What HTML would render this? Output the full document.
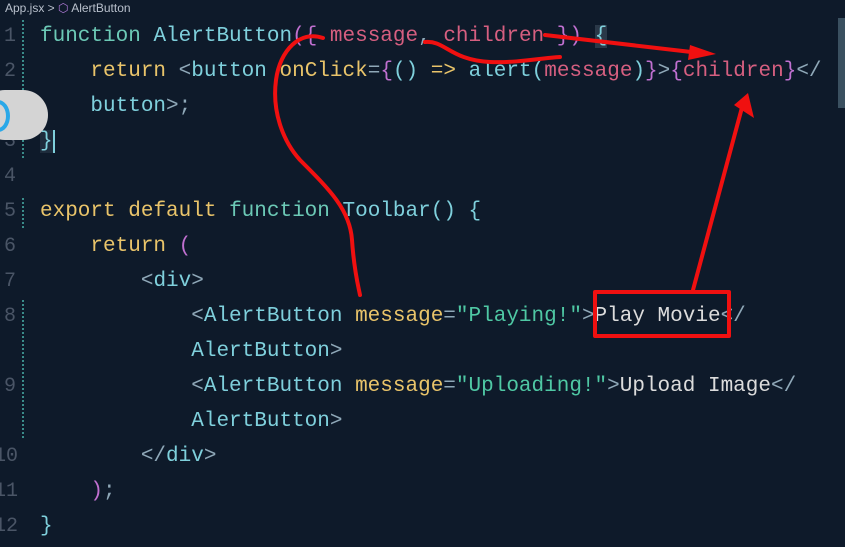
<!DOCTYPE html>
<html><head><meta charset="utf-8"><style>
html,body{margin:0;padding:0}
body{width:845px;height:547px;overflow:hidden;background:#0e1a2a;position:relative;font-family:"Liberation Mono",monospace}
.bc{position:absolute;left:5px;top:1px;font:12px "Liberation Sans",sans-serif;color:#b8c0cc}
.ln{position:absolute;left:0;width:16px;text-align:right;font-size:20px;color:#4a5566}
.code{position:absolute;left:40px;font-size:21px;white-space:pre;color:#8fd3e0;margin-top:3px}
.k{color:#6cc9b6}.t{color:#7fd0dc}.y{color:#e9c46a}.p{color:#d65f80}.g{color:#4fc8a4}.w{color:#dcdcdc}.m{color:#c070d0}.d{color:#8fa8b8}
.gut{position:absolute;left:22px;width:2px;background:repeating-linear-gradient(#3a8c8a 0 2px,transparent 2px 4px)}
</style></head><body>
<div class="bc">App.jsx &gt; <span style="color:#b07ad8">⬡</span> AlertButton</div>
<div class="gut" style="top:20px;height:140px"></div>
<div class="gut" style="top:198px;height:30px"></div>
<div class="gut" style="top:300px;height:140px"></div>
<div class="ln" style="top:25px">1</div>
<div class="ln" style="top:60px">2</div>
<div class="ln" style="top:130px">3</div>
<div class="ln" style="top:165px">4</div>
<div class="ln" style="top:200px">5</div>
<div class="ln" style="top:235px">6</div>
<div class="ln" style="top:270px">7</div>
<div class="ln" style="top:305px">8</div>
<div class="ln" style="top:375px">9</div>
<div class="ln" style="top:445px;left:-6px">10</div>
<div class="ln" style="top:480px;left:-6px">11</div>
<div class="ln" style="top:515px;left:-6px">12</div>
<div class="code" style="top:22px"><span class="k">function</span> <span class="t">AlertButton</span><span class="m">({</span> <span class="p">message</span><span class="d">,</span> <span class="p">children</span> <span class="m">})</span> <span class="t" style="background:#2a3848">{</span></div>
<div class="code" style="top:57px">    <span class="y">return</span> <span class="d">&lt;</span><span class="t">button</span> <span class="y">onClick</span><span class="d">=</span><span class="m">{</span><span class="t">()</span> <span class="y">=&gt;</span> <span class="t">alert(</span><span class="p">message</span><span class="t">)</span><span class="m">}</span><span class="d">&gt;</span><span class="m">{</span><span class="p">children</span><span class="m">}</span><span class="d">&lt;/</span></div>
<div class="code" style="top:92px">    <span class="t">button</span><span class="d">&gt;;</span></div>
<div class="code" style="top:127px"><span class="t" style="border-right:2px solid #7fd0dc;background:#1e2c3c">}</span></div>
<div class="code" style="top:197px"><span class="y">export</span> <span class="y">default</span> <span class="k">function</span> <span class="t">Toolbar</span><span class="t">()</span> <span class="t">{</span></div>
<div class="code" style="top:232px">    <span class="y">return</span> <span class="m">(</span></div>
<div class="code" style="top:267px">        <span class="d">&lt;</span><span class="t">div</span><span class="d">&gt;</span></div>
<div class="code" style="top:302px">            <span class="d">&lt;</span><span class="t">AlertButton</span> <span class="y">message</span><span class="d">=</span><span class="g">"Playing!"</span><span class="d">&gt;</span><span class="w">Play Movie</span><span class="d">&lt;/</span></div>
<div class="code" style="top:337px">            <span class="t">AlertButton</span><span class="d">&gt;</span></div>
<div class="code" style="top:372px">            <span class="d">&lt;</span><span class="t">AlertButton</span> <span class="y">message</span><span class="d">=</span><span class="g">"Uploading!"</span><span class="d">&gt;</span><span class="w">Upload Image</span><span class="d">&lt;/</span></div>
<div class="code" style="top:407px">            <span class="t">AlertButton</span><span class="d">&gt;</span></div>
<div class="code" style="top:442px">        <span class="d">&lt;/</span><span class="t">div</span><span class="d">&gt;</span></div>
<div class="code" style="top:477px">    <span class="m">)</span><span class="d">;</span></div>
<div class="code" style="top:512px"><span class="t">}</span></div>
<div style="position:absolute;left:-20px;top:90px;width:68px;height:50px;border-radius:25px;background:#d4d4d4"></div>
<div style="position:absolute;left:-14px;top:100px;width:16px;height:24px;border:4px solid #2aa8e8;border-radius:50%"></div>
<div style="position:absolute;left:838px;top:18px;width:7px;height:90px;background:#3a5060"></div>
<svg style="position:absolute;left:0;top:0" width="845" height="547">
<g fill="none" stroke="#f01010" stroke-width="4" stroke-linecap="round" stroke-linejoin="round">
<path d="M323 38 C300 30 280 50 276 80 C272 110 282 140 300 160 C330 190 350 210 352 240 C354 270 358 285 360 295"/>
<path d="M425 42 C445 40 450 60 490 62 C520 63 540 58 560 57"/>
<path d="M545 35 L700 53"/>
<path d="M693 290 L744 100"/>
<rect x="595" y="292" width="134" height="44" stroke-width="4"/>
</g>
<polygon points="690,45 716,54 688,60" fill="#f01010"/>
<polygon points="734,105 748,93 754,118" fill="#f01010"/>
</svg>
</body></html>
